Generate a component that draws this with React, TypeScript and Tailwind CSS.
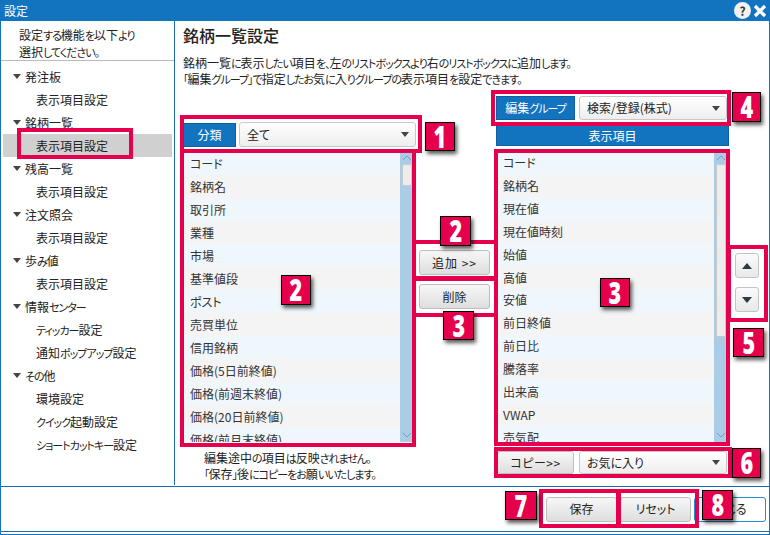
const leftItems = ['コード', '銘柄名', '取引所', '業種', '市場', '基準値段', 'ポスト', '売買単位', '信用銘柄', '価格(5日前終値)', '価格(前週末終値)', '価格(20日前終値)', '価格(前月末終値)'];
const rightItems = ['コード', '銘柄名', '現在値', '現在値時刻', '始値', '高値', '安値', '前日終値', '前日比', '騰落率', '出来高', 'VWAP', '売気配'];

const tree = [
  { name: '発注板', children: ['表示項目設定'] },
  { name: '銘柄一覧', children: ['表示項目設定'], selected: true },
  { name: '残高一覧', children: ['表示項目設定'] },
  { name: '注文照会', children: ['表示項目設定'] },
  { name: '歩み値', children: ['表示項目設定'] },
  { name: '情報センター', children: ['ティッカー設定', '通知ポップアップ設定'] },
  { name: 'その他', children: ['環境設定', 'クイック起動設定', 'ショートカットキー設定'] },
];

// kana in the original UI font is much narrower than its kanji
function Kana({ text }: { text: string }) {
  const parts = text.split(/([\u3040-\u30ff、。「」]+)/);
  return (
    <span>
      {parts.map((part, i) =>
        i % 2 === 1 ? (
          <span key={i} className="text-[11px] tracking-[-1px]">
            {part}
          </span>
        ) : (
          part
        ),
      )}
    </span>
  );
}

function Caret() {
  return <span className="h-0 w-0 border-x-[4px] border-t-[5px] border-x-transparent border-t-[#444]" />;
}

function Select({ label, className }: { label: string; className: string }) {
  return (
    <div className={`flex items-center justify-between rounded-[3px] border border-[#c8c8c8] bg-gradient-to-b from-[#ffffff] to-[#eeeeee] pl-[7px] pr-[6px] ${className}`}>
      <span>{label}</span>
      <Caret />
    </div>
  );
}

function Btn({ label, className }: { label: string; className: string }) {
  return (
    <button className={`flex items-center justify-center rounded-[3px] border border-[#bdbdbd] bg-gradient-to-b from-[#f7f7f7] to-[#dedede] text-[#222] ${className}`}>
      {label}
    </button>
  );
}

function Chevron({ up }: { up?: boolean }) {
  return (
    <svg width="10" height="6" viewBox="0 0 10 6" className="mx-auto">
      <path d={up ? 'M1 5 L5 1 L9 5' : 'M1 1 L5 5 L9 1'} fill="none" stroke="#7d9db5" strokeWidth="1" />
    </svg>
  );
}

function ListBox({ items, rowClass, thumbClass }: { items: string[]; rowClass: string; thumbClass: string }) {
  return (
    <div className="flex h-full w-full overflow-hidden">
      <div className="min-w-0 flex-1">
        {items.map((item, i) => (
          <div key={item} className={`flex items-center pl-[7px] text-[#333] ${rowClass} ${i % 2 === 0 ? 'bg-[#f0f7fc]' : 'bg-[#f4f4f4]'}`}>
            {item}
          </div>
        ))}
      </div>
      <div className="flex w-[13px] shrink-0 flex-col bg-[#a9cde6]">
        <div className="flex h-[12px] shrink-0 items-center">
          <Chevron up />
        </div>
        <div className={`mx-auto w-[10px] rounded-[1px] border border-[#c9c9c9] bg-[#ececec] ${thumbClass}`} />
        <div className="mt-auto flex h-[14px] shrink-0 items-center">
          <Chevron />
        </div>
      </div>
    </div>
  );
}

function Badge({ n, className }: { n: number; className: string }) {
  return (
    <div className={`absolute flex items-center justify-center border border-black bg-[#e6004c] text-[30px] font-extrabold leading-none text-white shadow-[2px_3px_4px_rgba(0,0,0,0.65)] [font-family:'Open_Sans',sans-serif] ${className}`}>
      <span className="inline-block scale-x-[0.72]">{n}</span>
    </div>
  );
}

function Frame({ className }: { className: string }) {
  return <div className={`pointer-events-none absolute border-[4px] border-[#e6004c] ${className}`} />;
}

export default function App() {
  return (
    <div className="relative flex h-[535px] w-[770px] flex-col overflow-hidden bg-white text-[12px] leading-none text-[#222] [font-family:'Noto_Sans_CJK_JP','Noto_Sans',sans-serif] [font-feature-settings:'palt']">
      {/* title bar */}
      <div className="flex h-[21px] shrink-0 items-center justify-between bg-[#1273bf] pl-[4px] pr-[3px] text-white">
        <span>設定</span>
        <div className="flex items-center gap-[2px]">
          <div className="flex h-[17px] w-[17px] items-center justify-center rounded-full bg-[#f2f2f2] text-[12px] font-bold text-[#333]">?</div>
          <svg width="14" height="14" viewBox="0 0 14 14">
            <path d="M2 2 L12 12 M12 2 L2 12" stroke="white" strokeWidth="3.2" />
          </svg>
        </div>
      </div>

      <div className="flex min-h-0 flex-1 flex-col border-x border-b border-[#1273bf]">
        <div className="flex h-[466px] shrink-0 border-b border-[#1a6cb0]">
          {/* sidebar */}
          <aside className="mb-[1px] flex w-[174px] shrink-0 flex-col border-r border-[#1a6cb0]">
            <div className="flex h-[40px] shrink-0 flex-col justify-center gap-[5px] border-b border-[#bbbbbb] pl-[18px] pt-[6px]">
              <Kana text="設定する機能を以下より" />
              <Kana text="選択してください。" />
            </div>
            <div className="pt-[4px]">
              {tree.map((group) => (
                <div key={group.name}>
                  <div className="flex h-[23px] items-center gap-[4px] pl-[12px]">
                    <Caret />
                    <Kana text={group.name} />
                  </div>
                  {group.children.map((child) => (
                    <div key={child} className={`mx-[2px] flex h-[23px] items-center pl-[33px] ${group.selected ? 'bg-[#d0d0d0]' : ''}`}>
                      <Kana text={child} />
                    </div>
                  ))}
                </div>
              ))}
            </div>
          </aside>

          {/* main panel */}
          <main className="min-w-0 flex-1 pl-[8px]">
            <h1 className="pt-[7px] text-[16px] font-medium leading-[15px]">銘柄一覧設定</h1>
            <p className="mt-[12px] flex flex-col text-[12px] leading-[16px]">
              <Kana text="銘柄一覧に表示したい項目を、左のリストボックスより右のリストボックスに追加します。" />
              <Kana text="「編集グループ」で指定したお気に入りグループの表示項目を設定できます。" />
            </p>

            <div className="mt-[9px] flex items-start">
              {/* left column */}
              <div className="flex w-[236px] shrink-0 flex-col pt-[26px]">
                <div className="flex h-[25px] items-center gap-[3px]">
                  <div className="flex h-[24px] w-[53px] items-center justify-center border border-[#0d5f9f] bg-[#1273bf] text-white">分類</div>
                  <Select label="全て" className="h-[25px] w-[177px]" />
                </div>
                <div className="mt-[5px] h-[290px] w-[230px]">
                  <ListBox items={leftItems} rowClass="h-[23px]" thumbClass="h-[22px]" />
                </div>
                <div className="mt-[10px] flex flex-col gap-[4px] pl-[21px]">
                  <Kana text="編集途中の項目は反映されません。" />
                  <Kana text="「保存」後にコピーをお願いいたします。" />
                </div>
              </div>

              {/* add / remove */}
              <div className="flex w-[77px] shrink-0 flex-col gap-[9px] pt-[154px]">
                <Btn label="追加 >>" className="h-[25px] w-[71px] tracking-[1px]" />
                <Btn label="削除" className="h-[25px] w-[71px]" />
              </div>

              {/* right column */}
              <div className="flex w-[233px] shrink-0 flex-col">
                <div className="flex h-[24px] items-center gap-[4px]">
                  <div className="flex h-[24px] w-[79px] items-center justify-center border border-[#0d5f9f] bg-[#1273bf] text-white">
                    <Kana text="編集グループ" />
                  </div>
                  <Select label="検索/登録(株式)" className="h-[24px] w-[148px]" />
                </div>
                <div className="mt-[5px] flex h-[21px] items-center justify-center border border-[#0d5f9f] bg-[#1273bf] text-white">表示項目</div>
                <div className="mt-[6px] h-[290px] w-[231px]">
                  <ListBox items={rightItems} rowClass="h-[22.85px]" thumbClass="h-[173px]" />
                </div>
                <div className="mt-[9px] flex h-[23px] items-center gap-[5px] pl-[1px]">
                  <Btn label="コピー>>" className="h-[23px] w-[77px] tracking-[0.5px]" />
                  <Select label="お気に入り" className="h-[23px] w-[148px]" />
                </div>
              </div>

              {/* move up / down */}
              <div className="flex shrink-0 flex-col gap-[9px] pl-[6px] pt-[157px]">
                <button className="flex h-[25px] w-[24px] items-center justify-center rounded-[3px] border border-[#c4c4c4] bg-gradient-to-b from-[#fbfbfb] to-[#e8e8e8]">
                  <span className="h-0 w-0 border-x-[5px] border-b-[6px] border-x-transparent border-b-[#2c3a44]" />
                </button>
                <button className="flex h-[25px] w-[24px] items-center justify-center rounded-[3px] border border-[#c4c4c4] bg-gradient-to-b from-[#fbfbfb] to-[#e8e8e8]">
                  <span className="h-0 w-0 border-x-[5px] border-t-[6px] border-x-transparent border-t-[#2c3a44]" />
                </button>
              </div>
            </div>
          </main>
        </div>

        {/* footer */}
        <div className="flex h-[45px] shrink-0 items-center justify-end gap-[3px] border-b border-[#1a6cb0] pr-[3px]">
          <Btn label="保存" className="h-[25px] w-[71px]" />
          <Btn label="リセット" className="h-[25px] w-[71px]" />
          <button className="flex h-[25px] w-[72px] items-center justify-center rounded-[3px] border border-[#1f8fd8] bg-white">閉じる</button>
        </div>
      </div>

      {/* annotation overlays */}
      <Frame className="left-[17px] top-[128px] h-[31px] w-[116px]" />
      <Frame className="left-[180px] top-[115px] h-[38px] w-[242px]" />
      <Frame className="left-[180px] top-[149px] h-[298px] w-[236px]" />
      <Frame className="left-[491px] top-[90px] h-[36px] w-[240px]" />
      <Frame className="left-[494px] top-[149px] h-[297px] w-[236px]" />
      <Frame className="left-[412px] top-[240px] h-[40px] w-[86px]" />
      <Frame className="left-[412px] top-[277px] h-[40px] w-[86px]" />
      <Frame className="left-[727px] top-[245px] h-[77px] w-[41px]" />
      <Frame className="left-[494px] top-[447px] h-[31px] w-[238px]" />
      <Frame className="left-[539px] top-[489px] h-[39px] w-[81px]" />
      <Frame className="left-[617px] top-[489px] h-[39px] w-[82px]" />

      <Badge n={1} className="left-[425px] top-[122px] h-[29px] w-[30px]" />
      <Badge n={2} className="left-[281px] top-[275px] h-[30px] w-[30px]" />
      <Badge n={2} className="left-[440px] top-[216px] h-[30px] w-[31px]" />
      <Badge n={3} className="left-[443px] top-[311px] h-[29px] w-[31px]" />
      <Badge n={3} className="left-[600px] top-[278px] h-[29px] w-[30px]" />
      <Badge n={4} className="left-[732px] top-[92px] h-[30px] w-[29px]" />
      <Badge n={5} className="left-[733px] top-[328px] h-[29px] w-[31px]" />
      <Badge n={6} className="left-[732px] top-[448px] h-[30px] w-[29px]" />
      <Badge n={7} className="left-[505px] top-[491px] h-[29px] w-[32px]" />
      <Badge n={8} className="left-[702px] top-[490px] h-[30px] w-[31px]" />
    </div>
  );
}
